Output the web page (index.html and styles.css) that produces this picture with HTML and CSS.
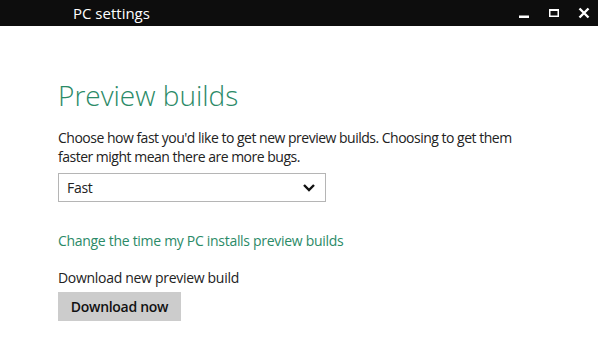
FILE: index.html
```html
<!DOCTYPE html>
<html>
<head>
  <title>PC settings</title>
  <link rel="stylesheet" href="styles.css">
</head>
<body>
  <div class="titlebar">
    <span class="app-title">PC settings</span>
    <div class="controls">
      <span class="ctl">
        <svg width="12" height="12" viewBox="0 0 12 12"><rect x="1" y="8.5" width="10" height="2.5" fill="#fff"/></svg>
      </span>
      <span class="ctl">
        <svg width="12" height="12" viewBox="0 0 12 12"><rect x="1.75" y="2.75" width="8.5" height="6.5" fill="none" stroke="#fff" stroke-width="1.5"/><rect x="1" y="2" width="10" height="2" fill="#fff"/></svg>
      </span>
      <span class="ctl">
        <svg width="12" height="12" viewBox="0 0 12 12"><path d="M1.5 1.5 L10.5 10.5 M10.5 1.5 L1.5 10.5" stroke="#fff" stroke-width="2.4"/></svg>
      </span>
    </div>
  </div>

  <div class="content">
    <h1>Preview builds</h1>
    <p class="desc">Choose how fast you'd like to get new preview builds. Choosing to get them faster might mean there are more bugs.</p>
    <div class="dropdown">
      <span>Fast</span>
      <svg width="14" height="10" viewBox="0 0 14 10"><path d="M2 2 L7 7 L12 2" fill="none" stroke="#111" stroke-width="2.4"/></svg>
    </div>
    <a class="link" href="#">Change the time my PC installs preview builds</a>
    <p class="label">Download new preview build</p>
    <button class="btn">Download now</button>
  </div>
</body>
</html>
```

FILE: styles.css
```css
* {
  box-sizing: border-box;
}
body {
  margin: 0;
  background-color: #fff;
  font-family: "Open Sans", "Noto Sans", sans-serif;
  color: #222;
  letter-spacing: -0.3px;
}
.titlebar {
  background-color: #0d0d0d;
  height: 26px;
  margin-right: 4px;
  display: flex;
  align-items: center;
  justify-content: space-between;
  padding-left: 73px;
  padding-right: 8px;
}
.app-title {
  color: #fff;
  font-size: 15px;
  letter-spacing: 0;
}
.controls {
  display: flex;
  gap: 18px;
}
.ctl {
  display: flex;
  width: 12px;
  height: 14px;
  align-items: center;
  justify-content: center;
}
.content {
  padding-left: 58px;
  padding-top: 50px;
}
h1 {
  margin: 0;
  font-size: 28px;
  font-weight: 300;
  color: #2b8a67;
  line-height: 38px;
  letter-spacing: 0;
}
.desc {
  margin: 14px 0 0 0;
  font-size: 14px;
  line-height: 19px;
  width: 490px;
  letter-spacing: -0.5px;
}
.dropdown {
  margin-top: 7px;
  width: 268px;
  height: 29px;
  border: 1px solid #b5b5b5;
  display: flex;
  align-items: center;
  justify-content: space-between;
  padding: 0 9px 0 8px;
  font-size: 14px;
}
.link {
  display: block;
  margin-top: 29px;
  color: #2b8a67;
  text-decoration: none;
  font-size: 14px;
  line-height: 19px;
}
.label {
  margin: 18px 0 0 0;
  font-size: 14px;
  line-height: 19px;
}
.btn {
  margin-top: 5px;
  width: 123px;
  height: 29px;
  border: none;
  background-color: #cccccc;
  font-family: "Open Sans", "Noto Sans", sans-serif;
  font-size: 14px;
  font-weight: 600;
  letter-spacing: -0.3px;
  color: #111;
}
```
